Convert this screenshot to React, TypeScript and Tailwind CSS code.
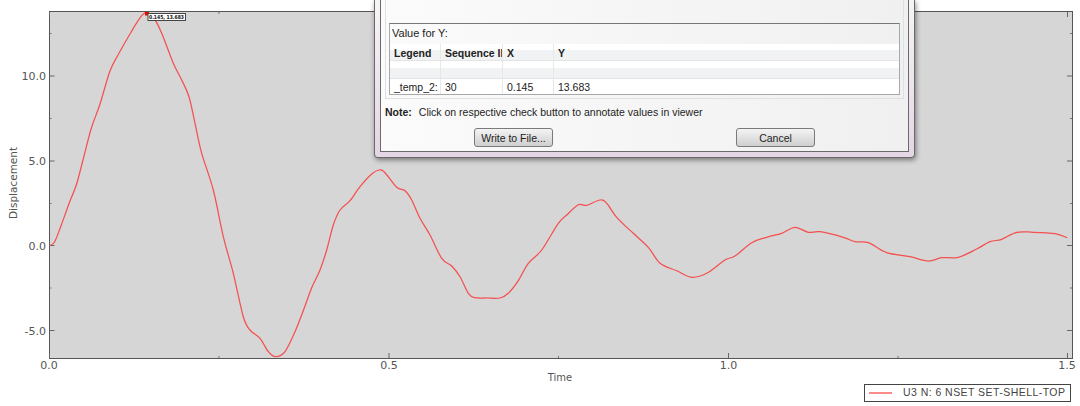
import React from "react";

const pts: [number, number][] = [
  [49.7,245.7],[54.7,241.7],[61.3,225],[69.7,201.7],[76.3,185],[83,160],[91.3,128.3],[99.7,105],[109.7,71.7],[118,55],[131.3,31.7],[139.7,18.3],[146.3,12.7],[155,20],[161.7,33.3],[173.3,63.3],[181.7,80],[189,96.7],[195,123.3],[201.7,153.3],[213.3,190],[223.3,236.7],[233.3,273.3],[243.3,316.7],[250,330],[260,338.3],[268.3,351.7],[275.7,356.7],[285,351.7],[295,331.7],[305,306],[312,287],[320,270],[326.7,250],[333.3,225],[340,210],[350,200.7],[360,186.7],[371.7,174],[379.3,170],[385,172.7],[396.7,187.3],[405,190.7],[411.7,200],[420,218.3],[430,235],[441.7,258.3],[451.7,266],[460,276.7],[468.3,293.3],[475,297.7],[487,298],[500,298],[508.3,293.3],[518.3,280.7],[528.3,263.3],[541.7,250],[558.3,223.3],[566.7,215],[578.3,204.7],[586.7,205.3],[600,200],[606.7,203.3],[616.7,217.3],[633.3,233.3],[648.3,247.3],[660,263.3],[676.7,270.7],[691.7,277.3],[706.7,273.3],[725,260],[735,256],[751.7,242.7],[766.7,237.3],[781.7,233.3],[795,227.3],[808.3,232.3],[820,231.7],[843.3,237.3],[855,241.7],[868.3,242.7],[886.7,252.7],[910,256.7],[928.3,261],[941.7,257.7],[958.3,257.3],[976.7,249],[990,241.7],[1001.7,239.3],[1016.7,232.3],[1033.3,232.3],[1055,233.7],[1067.3,237.7],
];

function smooth(p: [number, number][]) {
  let d = `M${p[0][0]} ${p[0][1]}`;
  for (let i = 0; i < p.length - 1; i++) {
    const a = p[Math.max(i - 1, 0)], b = p[i], c = p[i + 1], e = p[Math.min(i + 2, p.length - 1)];
    const c1x = b[0] + (c[0] - a[0]) / 6, c1y = b[1] + (c[1] - a[1]) / 6;
    const c2x = c[0] - (e[0] - b[0]) / 6, c2y = c[1] - (e[1] - b[1]) / 6;
    d += `C${c1x.toFixed(1)} ${c1y.toFixed(1)} ${c2x.toFixed(1)} ${c2y.toFixed(1)} ${c[0]} ${c[1]}`;
  }
  return d;
}

const axisFont = { fontFamily: "'DejaVu Sans', sans-serif" };
const yMajor = [76, 161, 245.5, 330.5];
const yMinor = [33.5, 118.5, 203.5, 288];
const xMajor = [49.5, 389, 728.5, 1067.5];
const xMinor = [219, 558.5, 898];

function Chart() {
  return (
    <svg width={1080} height={384} className="block">
      <rect x={49.5} y={11.5} width={1023} height={347} fill="#d6d6d6" stroke="#555555" />
      {yMajor.map((y) => (
        <g key={y} stroke="#666666">
          <path d={`M49.5 ${y}h5`} />
          <path d={`M1072 ${y}h-5`} />
        </g>
      ))}
      {yMinor.map((y) => (
        <g key={y} stroke="#777777">
          <path d={`M49.5 ${y}h2`} />
          <path d={`M1072 ${y}h-2`} />
        </g>
      ))}
      {xMajor.map((x) => (
        <g key={x} stroke="#666666">
          <path d={`M${x} 358v-5`} />
          <path d={`M${x} 12v5`} />
        </g>
      ))}
      {xMinor.map((x) => (
        <g key={x} stroke="#777777">
          <path d={`M${x} 358v-2`} />
          <path d={`M${x} 12v2`} />
        </g>
      ))}
      <g fill="#555555" fontSize={11} style={axisFont}>
        <text x={46} y={80} textAnchor="end">10.0</text>
        <text x={46} y={165} textAnchor="end">5.0</text>
        <text x={46} y={250} textAnchor="end">0.0</text>
        <text x={46} y={335} textAnchor="end">-5.0</text>
        <text x={49} y={369} textAnchor="middle">0.0</text>
        <text x={389} y={369} textAnchor="middle">0.5</text>
        <text x={728.5} y={369} textAnchor="middle">1.0</text>
        <text x={1067} y={369} textAnchor="middle">1.5</text>
        <text x={560} y={381} textAnchor="middle" fontSize={10}>Time</text>
        <text x={0} y={0} textAnchor="middle" fontSize={10.5} transform="translate(17 183) rotate(-90)">Displacement</text>
      </g>
      <path d={smooth(pts)} fill="none" stroke="#f45050" strokeWidth={1.25} />
      <rect x={145} y={12} width={4} height={3.5} fill="#ee0000" />
      <rect x={148} y={13.5} width={37.5} height={7} fill="#ffffff" stroke="#444444" />
      <text x={149} y={19} fontSize={5.5} fontWeight="bold" fill="#111111" style={axisFont} textLength={35} lengthAdjust="spacingAndGlyphs">0.145, 13.683</text>
    </svg>
  );
}

function Cell({ w, children, bold }: { w: string; children?: React.ReactNode; bold?: boolean }) {
  return (
    <div className={`${w} h-full shrink-0 overflow-hidden whitespace-nowrap border-r border-[#e8e8e8] pl-1 ${bold ? "font-bold" : ""}`}>
      {children}
    </div>
  );
}

function Button({ label, className }: { label: string; className: string }) {
  return (
    <div className={`h-[19px] w-[79px] rounded-[3px] border border-[#7a7a7a] bg-gradient-to-b from-[#f4f4f4] to-[#cfcfcf] text-center text-[10.5px] leading-[18px] text-[#222222] ${className}`}>
      {label}
    </div>
  );
}

function Dialog() {
  return (
    <div className="absolute left-[374px] top-0 h-[158px] w-[541px] rounded-b-[4px] border-x border-b border-[#6a6a6a] bg-gradient-to-b from-[#f7f4f7] to-[#e4d6e4] px-[5px] pb-[5px] shadow-[1px_2px_5px_rgba(0,0,0,0.45)]">
      <div
        className="h-full border-x border-b border-[#6a6a6a] bg-gradient-to-r from-[#fbfbfb] to-[#f0f0f0] px-1 text-[#222222]"
        style={{ fontFamily: "'Liberation Sans', sans-serif" }}
      >
        <div className="h-[99px] border-x border-b border-[#dde1e4] px-[3px] pt-[23px]">
          <div className="h-[72px] border border-[#a8a8a8] border-t-[#777777] text-[10.5px]">
            <div className="h-[20px] pl-[2px] text-[11px] leading-[18px]">Value for Y:</div>
            <div className="flex h-[16px] items-center bg-gradient-to-b from-white from-40% to-[#f1f2f4] to-40% leading-[18px]">
              <Cell w="w-[51px]" bold>Legend</Cell>
              <Cell w="w-[62px]" bold>Sequence ID</Cell>
              <Cell w="w-[51px]" bold>X</Cell>
              <div className="h-full pl-1 font-bold">Y</div>
            </div>
            <div className="flex h-[18px] border-t border-[#e4e4e4] bg-gradient-to-b from-white from-40% to-[#f1f2f4] to-40%">
              <Cell w="w-[51px]" />
              <Cell w="w-[62px]" />
              <Cell w="w-[51px]" />
            </div>
            <div className="flex h-[16px] items-center border-t border-[#e4e4e4] bg-white leading-[17px]">
              <Cell w="w-[51px]">_temp_2: U3</Cell>
              <Cell w="w-[62px]">30</Cell>
              <Cell w="w-[51px]">0.145</Cell>
              <div className="h-full pl-1">13.683</div>
            </div>
          </div>
        </div>
        <div className="mt-[6px] flex h-[16px] items-center whitespace-nowrap text-[10.5px]">
          <span className="font-bold">Note:</span>
          <span className="ml-[7px]">Click on respective check button to annotate values in viewer</span>
        </div>
        <div className="mt-[7px] flex">
          <Button label="Write to File..." className="ml-[89px]" />
          <Button label="Cancel" className="ml-[183px]" />
        </div>
      </div>
    </div>
  );
}

export default function App() {
  return (
    <div className="relative h-[406px] w-[1080px] overflow-hidden bg-white">
      <Chart />
      <div className="flex justify-end pr-[9px]">
        <div
          className="flex h-[18px] w-[207px] items-center border border-[#444444] bg-white text-[10.5px] text-[#444444]"
          style={{ fontFamily: "'Liberation Sans', sans-serif" }}
        >
          <span className="ml-[4px] h-[2px] w-[23px] bg-[#fb8a8a]" />
          <span className="ml-[11px] whitespace-nowrap tracking-[0.45px]">U3 N: 6 NSET SET-SHELL-TOP</span>
        </div>
      </div>
      <Dialog />
    </div>
  );
}
